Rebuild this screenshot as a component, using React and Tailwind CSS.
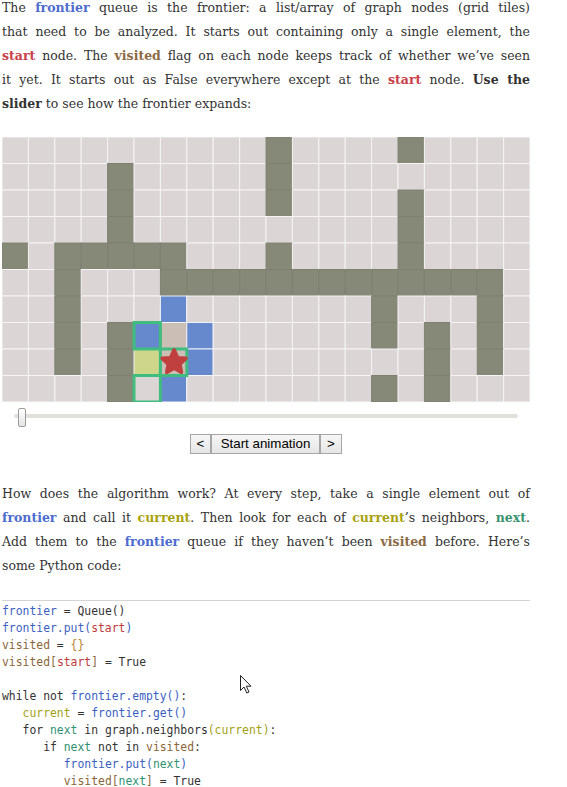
const COLS = 20;
const ROWS = 10;
const CW = 26.4;
const CH = 26.5;

const WALLS = {
  0: [10, 15],
  1: [4, 10],
  2: [4, 10, 15],
  3: [4, 15],
  4: [0, 2, 3, 4, 5, 6, 10, 15],
  5: [2, 6, 7, 8, 9, 10, 11, 12, 13, 14, 15, 16, 17, 18],
  6: [2, 14, 18],
  7: [2, 4, 14, 16, 18],
  8: [2, 4, 16, 18],
  9: [4, 14, 16],
};

const FRONTIER = ["6,6", "7,5", "7,7", "8,7", "9,6"];
const VISITED = ["7,6", "8,6"];
const CURRENT = "8,5";
const NEIGHBORS = [
  [7, 5],
  [8, 6],
  [9, 5],
];

function cellFill(r, c) {
  const key = `${r},${c}`;
  if ((WALLS[r] || []).includes(c)) return ["#868878", "#7e8071"];
  if (key === CURRENT) return ["#cdd68b", "#f4f2f2"];
  if (FRONTIER.includes(key)) return ["#6688cc", "#eef0f6"];
  if (VISITED.includes(key)) return ["#cbbfb5", "#f4f2f2"];
  return ["#dcd5d6", "#f6f4f4"];
}

function GridDiagram() {
  const cells = [];
  for (let r = 0; r < ROWS; r++) {
    for (let c = 0; c < COLS; c++) {
      const [fill, stroke] = cellFill(r, c);
      cells.push(
        <rect
          key={`${r}-${c}`}
          x={c * CW}
          y={r * CH}
          width={CW}
          height={CH}
          fill={fill}
          stroke={stroke}
          strokeWidth="1"
        />
      );
    }
  }
  const cx = 6 * CW + CW / 2 + 0.5;
  const cy = 8 * CH + CH / 2;
  return (
    <svg width="528" height="265" viewBox="0 0 528 265" className="block">
      {cells}
      {NEIGHBORS.map(([r, c]) => (
        <rect
          key={`n-${r}-${c}`}
          x={c * CW}
          y={r * CH}
          width={CW}
          height={CH}
          fill="none"
          stroke="#40bd7e"
          strokeWidth="3"
        />
      ))}
      <g transform={`translate(${cx} ${cy})`}>
        <polygon
          points="0,-12.5 3.6,-4.6 12,-3.9 5.8,1.9 7.4,10.1 0,6 -7.4,10.1 -5.8,1.9 -12,-3.9 -3.6,-4.6"
          fill="#c0403f"
          stroke="#c0403f"
          strokeWidth="3.5"
          strokeLinejoin="round"
        />
      </g>
    </svg>
  );
}

function Line({ children, last = false }) {
  return (
    <div className={last ? "text-left" : "text-justify [text-align-last:justify]"}>{children}</div>
  );
}

const B = ({ c, children }) => <b className={`font-bold ${c}`}>{children}</b>;

function Code() {
  const fr = "text-[#3b5fbf]";
  const st = "text-[#c03a3a]";
  const vi = "text-[#8b6639]";
  const cu = "text-[#a3a116]";
  const nx = "text-[#2f9272]";
  return (
    <pre className="mt-[22px] border-t border-[#d4d4d4] pt-[2px] font-['DejaVu_Sans_Mono',monospace] text-[11.4px] leading-[17px] text-[#333]">
      <span className={fr}>frontier</span> = Queue(){"\n"}
      <span className={fr}>frontier.put(<span className={st}>start</span>)</span>{"\n"}
      <span className={vi}>visited</span> = <span className="text-[#b5852c]">{"{}"}</span>{"\n"}
      <span className={vi}>visited[<span className={st}>start</span>]</span> = True{"\n"}
      {"\n"}
      while not <span className={fr}>frontier.empty()</span>:{"\n"}
      {"   "}<span className={cu}>current</span> = <span className={fr}>frontier.get()</span>{"\n"}
      {"   "}for <span className={nx}>next</span> in graph.neighbors<span className={cu}>(current)</span>:{"\n"}
      {"      "}if <span className={nx}>next</span> not in <span className={vi}>visited</span>:{"\n"}
      {"         "}<span className={fr}>frontier.put(<span className={nx}>next</span>)</span>{"\n"}
      {"         "}<span className={vi}>visited[<span className={nx}>next</span>]</span> = True
    </pre>
  );
}

export default function App() {
  const fr = "text-[#4d6ccf]";
  const st = "text-[#c9404a]";
  const vi = "text-[#8b6a45]";
  const cu = "text-[#a8a210]";
  const nx = "text-[#3a9470]";
  return (
    <div className="relative h-[787px] w-[567px] overflow-hidden bg-white">
      <div className="-mt-[4px] ml-[2px] w-[528px] font-['DejaVu_Serif',serif] text-[12.5px] leading-[24px] text-[#333]">
        <Line>
          The <B c={fr}>frontier</B> queue is the frontier: a list/array of graph nodes (grid tiles)
        </Line>
        <Line>that need to be analyzed. It starts out containing only a single element, the</Line>
        <Line>
          <B c={st}>start</B> node. The <B c={vi}>visited</B> flag on each node keeps track of whether we’ve seen
        </Line>
        <Line>
          it yet. It starts out as False everywhere except at the <B c={st}>start</B> node. <b>Use the</b>
        </Line>
        <Line last>
          <b>slider</b> to see how the frontier expands:
        </Line>

        <div className="mt-[21px]">
          <GridDiagram />
        </div>

        <div className="relative mt-[6px] h-[19px]">
          <div className="absolute left-[12px] right-[12px] top-[6px] h-[4px] rounded-sm bg-[#e3dfda]" />
          <div className="absolute left-[16px] top-0 h-[19px] w-[8px] rounded-[2px] border border-[#9a9a9a] bg-gradient-to-b from-white to-[#e4e4e4]" />
        </div>

        <div className="mt-[7px] flex justify-center font-['Liberation_Sans',Arial,sans-serif] text-[13.33px] leading-[18px] text-black">
          <button className="h-[20px] w-[21px] border border-[#a6a6a6] bg-gradient-to-b from-[#f6f6f6] to-[#e6e6e6]">&lt;</button>
          <button className="h-[20px] w-[109px] border border-[#a6a6a6] bg-gradient-to-b from-[#f6f6f6] to-[#e6e6e6]">Start animation</button>
          <button className="h-[20px] w-[22px] border border-[#a6a6a6] bg-gradient-to-b from-[#f6f6f6] to-[#e6e6e6]">&gt;</button>
        </div>

        <div className="mt-[28px]">
          <Line>How does the algorithm work? At every step, take a single element out of</Line>
          <Line>
            <B c={fr}>frontier</B> and call it <B c={cu}>current</B>. Then look for each of <B c={cu}>current</B>’s neighbors, <B c={nx}>next</B>.
          </Line>
          <Line>
            Add them to the <B c={fr}>frontier</B> queue if they haven’t been <B c={vi}>visited</B> before. Here’s
          </Line>
          <Line last>some Python code:</Line>
        </div>

        <Code />
      </div>

      <svg className="absolute left-[240px] top-[675px]" width="13" height="19" viewBox="0 0 13 19">
        <path d="M0.5 0.5 L0.5 15.5 L4 12 L6.8 18 L9 17 L6.3 11.2 L11 11.2 Z" fill="#fff" stroke="#222" strokeWidth="1" strokeLinejoin="round" />
      </svg>
    </div>
  );
}
